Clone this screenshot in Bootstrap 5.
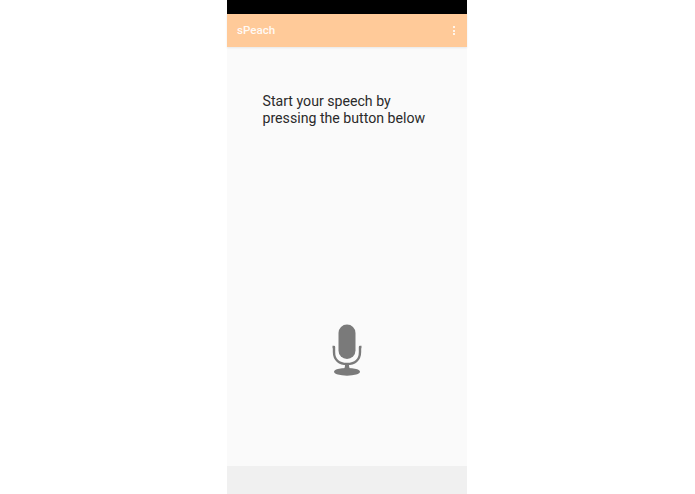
<!DOCTYPE html>
<html lang="en">
<head>
<meta charset="utf-8">
<title>sPeach</title>
<link href="https://cdn.jsdelivr.net/npm/bootstrap@5.3.0/dist/css/bootstrap.min.css" rel="stylesheet">
<style>
html, body { height: 494px; overflow: hidden; background: #fff; }
.phone { width: 240px; height: 494px; margin-left: 227px; font-family: Roboto, "Liberation Sans", sans-serif; }
.statusbar { height: 14px; background: #000; }
.appbar { height: 33px; background: #ffca99; box-shadow: 0 1px 2px rgba(0,0,0,.08); z-index: 1; padding: 0 12px 0 10px; }
.apptitle { color: rgba(255,255,255,.92); font-size: 11.6px; font-weight: 500; position: relative; top: .5px; }
.kebab { gap: 1.5px; }
.kebab i { display: block; width: 2px; height: 2px; background: #fff; opacity: .8; }
.screen { background: #fafafa; height: 419px; }
.prompt { color: #2a2a2a; font-size: 14.15px; line-height: 16.6px; padding: 46px 0 0 35.5px; margin: 0; }
.micwrap { padding-bottom: 86px; }
.micicon { width: 40px; height: 60px; display: block; }
.navstrip { height: 28px; background: #f0f0f0; }
</style>
</head>
<body class="m-0">
<div class="phone d-flex flex-column">
  <div class="statusbar"></div>
  <div class="appbar d-flex align-items-center justify-content-between position-relative">
    <span class="apptitle">sPeach</span>
    <span class="kebab d-flex flex-column"><i></i><i></i><i></i></span>
  </div>
  <div class="screen d-flex flex-column justify-content-between">
    <p class="prompt">Start your speech by<br>pressing the button below</p>
    <div class="micwrap d-flex justify-content-center">
      <svg class="micicon" viewBox="0 0 40 60" aria-label="microphone">
        <rect x="11.500" y="4.500" width="17" height="34.500" rx="8.500" fill="#7a7a7a"/>
        <path d="M5.500 27h1.500v5c0 8 5.500 12 13 12s13-4 13-12v-5h1.500" fill="none" stroke="#7a7a7a" stroke-width="2.400" stroke-linejoin="round"/>
        <path d="M18 44h4v2l1 4h-6l1-4z" fill="#7a7a7a"/>
        <ellipse cx="20" cy="51.800" rx="13" ry="3.900" fill="#7a7a7a"/>
      </svg>
    </div>
  </div>
  <div class="navstrip"></div>
</div>
<script src="https://cdn.jsdelivr.net/npm/bootstrap@5.3.0/dist/js/bootstrap.bundle.min.js"></script>
</body>
</html>
